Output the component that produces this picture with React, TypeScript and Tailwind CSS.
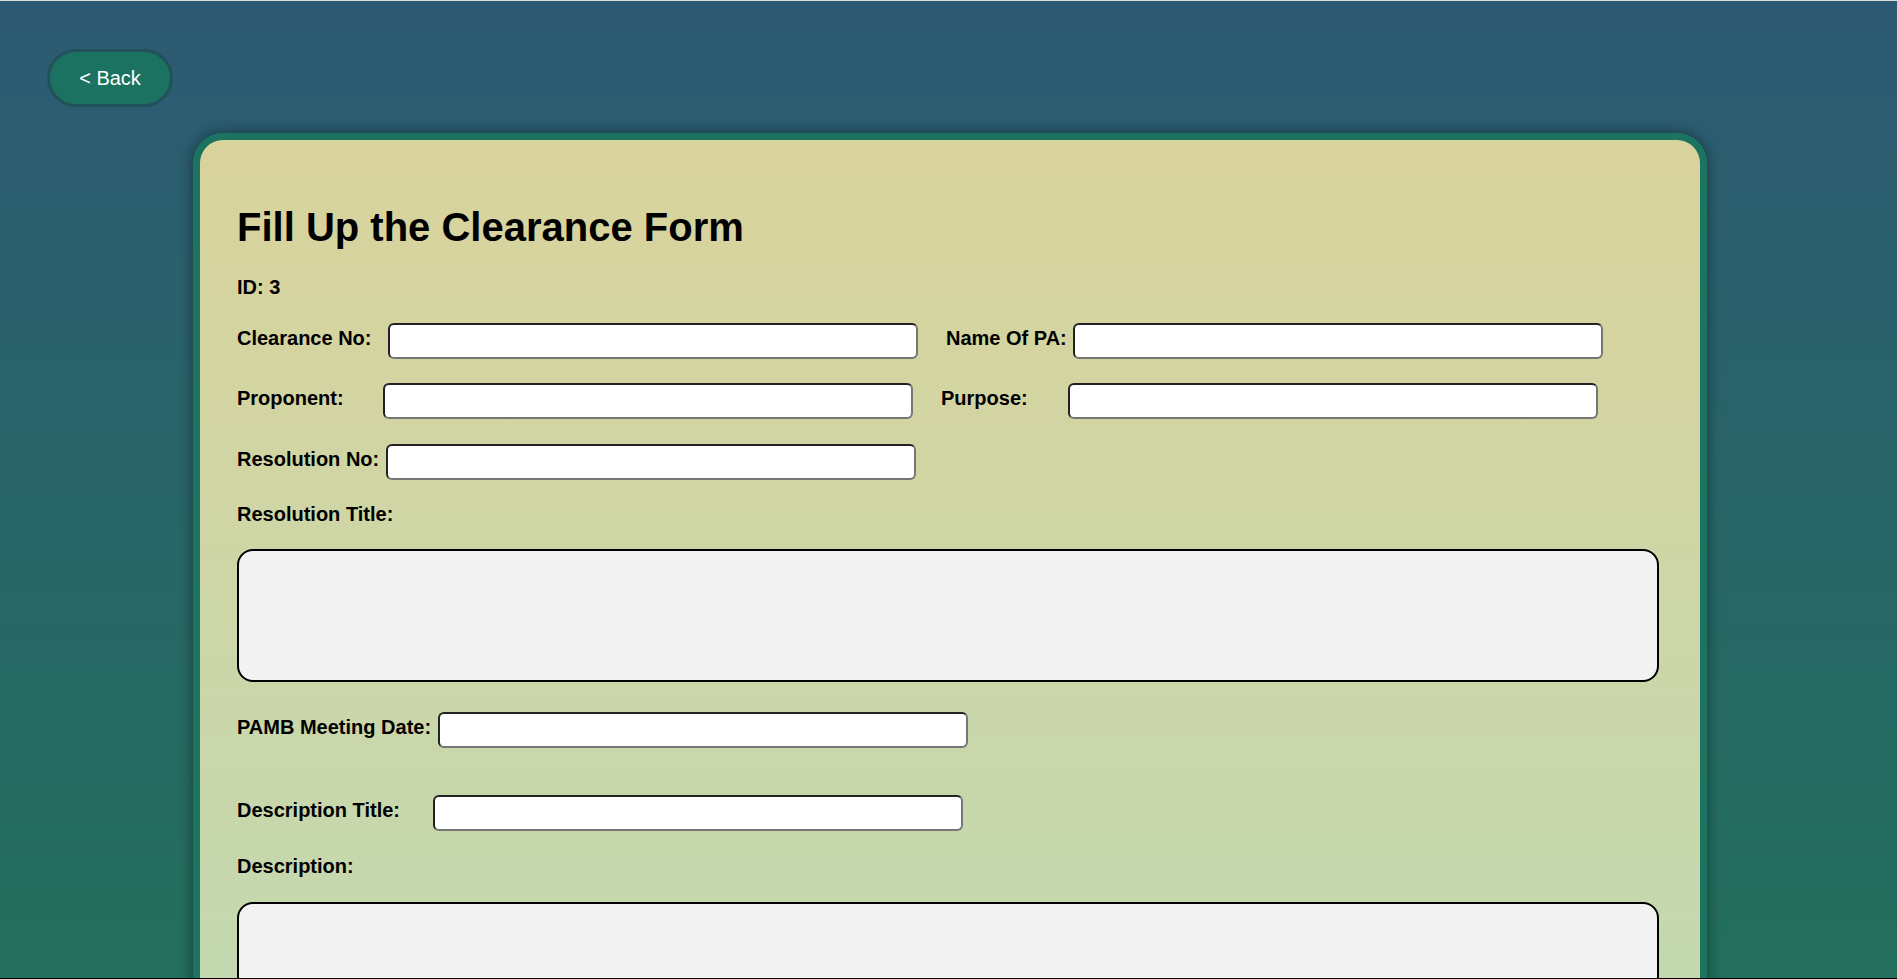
import React from 'react';

const labelCls = 'shrink-0 text-[20px] leading-[23px] font-bold text-black mb-[5px]';
const inputCls =
  'h-[36px] w-[530px] shrink-0 rounded-[6px] bg-white border-2 border-t-[#222] border-l-[#222] border-b-[#767676] border-r-[#767676] px-2 text-[16px] outline-none';
const areaCls =
  'block w-full h-[133px] rounded-[16px] border-2 border-black bg-[#f3f3f3] p-3 text-[16px] outline-none resize-none';

export default function App() {
  return (
    <div className="h-[979px] overflow-hidden border-t border-t-[#dcdcdc] border-b border-b-black bg-linear-to-b from-[#2d5a73] to-[#236f5c] font-['Liberation_Sans',Arial,Helvetica,sans-serif]">
      <div className="pt-[48px] pl-[47px]">
        <button className="h-[58px] w-[126px] rounded-full border-[3px] border-[#22505b] bg-[#1b7260] text-[20px] text-white">
          &lt; Back
        </button>
      </div>

      {/* Form card */}
      <div className="mt-[26px] ml-[193px] w-[1514px] rounded-[30px] border-[7px] border-[#1b7360] shadow-[0_0_14px_rgba(0,0,0,0.45)]">
        <div className="rounded-[23px] bg-linear-to-b from-[#d9d39c] to-[#c0d9b2] pt-[64px] pl-[37px] pr-[41px] pb-[60px]">
          <h1 className="text-[40px] leading-[46px] font-bold text-black">Fill Up the Clearance Form</h1>

          <p className="mt-[26px] text-[20px] leading-[23px] font-bold text-black">ID: 3</p>

          <div className="mt-[24px] flex items-center">
            <label className={`${labelCls} w-[151px]`}>Clearance No:</label>
            <input type="text" className={inputCls} />
            <label className={`${labelCls} ml-[28px] w-[127px]`}>Name Of PA:</label>
            <input type="text" className={inputCls} />
          </div>

          <div className="mt-[24px] flex items-center">
            <label className={`${labelCls} w-[146px]`}>Proponent:</label>
            <input type="text" className={inputCls} />
            <label className={`${labelCls} ml-[28px] w-[127px]`}>Purpose:</label>
            <input type="text" className={inputCls} />
          </div>

          <div className="mt-[25px] flex items-center">
            <label className={`${labelCls} w-[149px]`}>Resolution No:</label>
            <input type="text" className={inputCls} />
          </div>

          <p className="mt-[23px] text-[20px] leading-[23px] font-bold text-black">Resolution Title:</p>
          <textarea className={`${areaCls} mt-[23px]`} />

          <div className="mt-[30px] flex items-center">
            <label className={`${labelCls} w-[201px]`}>PAMB Meeting Date:</label>
            <input type="text" className={inputCls} />
          </div>

          <div className="mt-[47px] flex items-center">
            <label className={`${labelCls} w-[196px]`}>Description Title:</label>
            <input type="text" className={inputCls} />
          </div>

          <p className="mt-[24px] text-[20px] leading-[23px] font-bold text-black">Description:</p>
          <textarea className={`${areaCls} mt-[24px]`} />
        </div>
      </div>
    </div>
  );
}
